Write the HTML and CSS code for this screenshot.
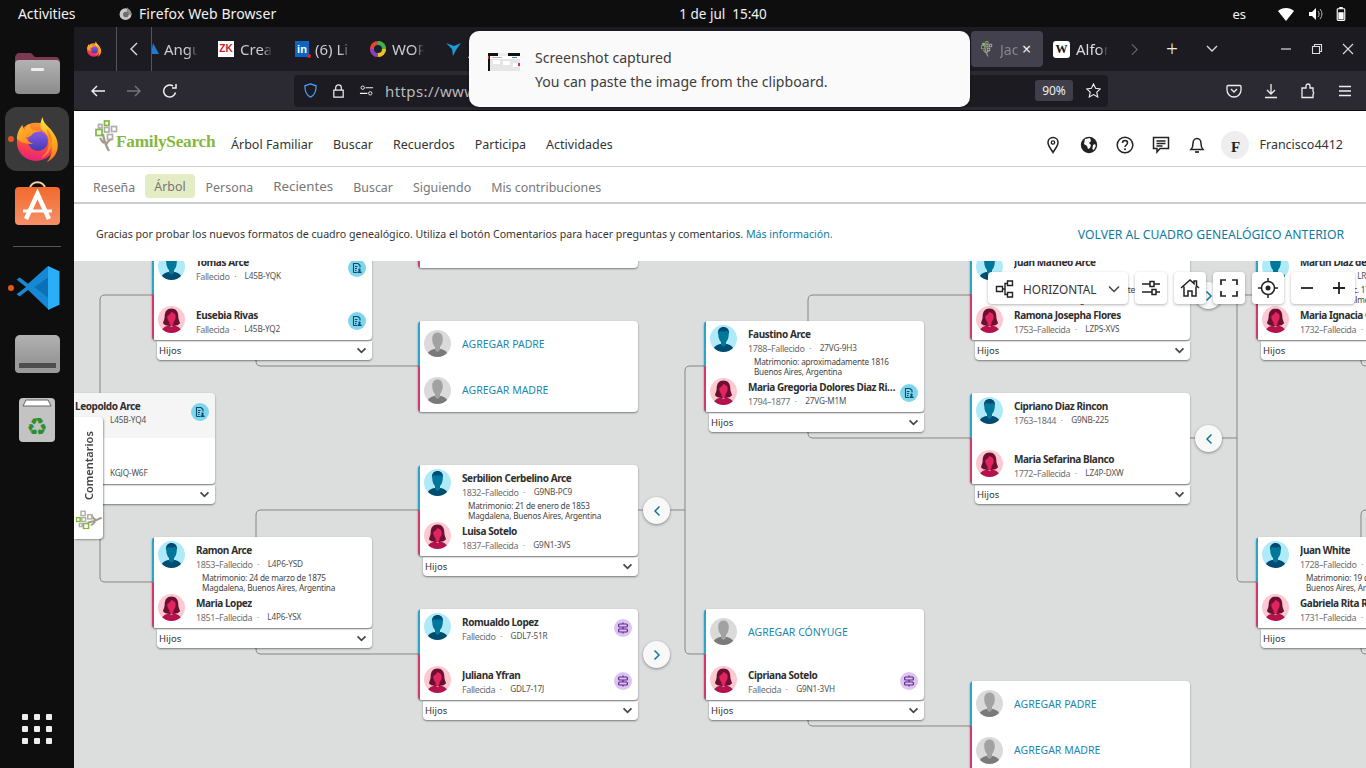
FILE: index.html
```html
<!DOCTYPE html>
<html lang="es">
<head>
<meta charset="utf-8">
<title>FamilySearch</title>
<link rel="stylesheet" href="styles.css">
</head>
<body>
<svg class="defs" aria-hidden="true">
  <defs>
    <linearGradient id="ffBody" x1="0.6" y1="0" x2="0.4" y2="1"><stop offset="0" stop-color="#ff9a2a"/><stop offset=".5" stop-color="#ff5236"/><stop offset="1" stop-color="#e8207a"/></linearGradient>
    <linearGradient id="ffFlame" x1="0.5" y1="0" x2="0.5" y2="1"><stop offset="0" stop-color="#ffe23f"/><stop offset=".6" stop-color="#ffa51e"/><stop offset="1" stop-color="#ff6a26"/></linearGradient>
    <linearGradient id="ffCore" x1="0.5" y1="0" x2="0.5" y2="1"><stop offset="0" stop-color="#8f5be8"/><stop offset="1" stop-color="#3f3bb0"/></linearGradient>
    <linearGradient id="ffFox" x1="0" y1="0" x2="1" y2="1"><stop offset="0" stop-color="#ffc02e"/><stop offset="1" stop-color="#ff7a1e"/></linearGradient>
    <linearGradient id="orangeBag" x1="0" y1="0" x2="0" y2="1"><stop offset="0" stop-color="#f26a2c"/><stop offset="1" stop-color="#f6906a"/></linearGradient>
    <linearGradient id="grayBox" x1="0" y1="0" x2="0" y2="1"><stop offset="0" stop-color="#b2b2b2"/><stop offset="1" stop-color="#8b8b8b"/></linearGradient>
    <symbol id="firefox" viewBox="0 0 48 48">
      <circle cx="23" cy="27" r="20" fill="url(#ffBody)"/>
      <path fill="url(#ffFlame)" d="M30 1c0 6 5 9 9 14 6 7 8 14 6 21-2 6-6 10-11 12 5-5 6-11 5-17-1-8-5-13-10-17-2-2-2-8 1-13z"/>
      <path fill="#ff8a1e" d="M34 13c5 5 7 12 5 19-2 6-6 10-11 12 5-4 8-9 8-15 0-6-1-11-2-16z"/>
      <circle cx="25" cy="26" r="10.500" fill="url(#ffCore)"/>
      <path fill="url(#ffFox)" d="M3 24c0-6 3-12 6-15 0 3 1 5 2 6 1-4 3-6 6-7-1 3 0 5 2 6 3 1 7 1 9 2-4 1-7 1-9 3-1 2-4 3-7 3 1 3 4 6 8 7-8 1-14-2-17-5z"/>
    </symbol>
    <symbol id="male" viewBox="0 0 27 27">
      <circle cx="13.500" cy="13.500" r="13.500" fill="#aeeaf8"/>
      <clipPath id="mClip"><circle cx="13.500" cy="13.500" r="13.500"/></clipPath>
      <g clip-path="url(#mClip)">
        <path fill="#004c70" d="M3 27c0-5 3-7 7-8h7c4 1 7 3 7 8z"/>
        <path fill="#00789c" d="M8.200 9c0-4 2-6.500 5.300-6.500S18.800 5 18.800 9c0 4.500-1.800 7-2.800 8v3l-2.500 2-2.500-2v-3c-1-1-2.800-3.500-2.800-8z"/>
        <path fill="#004c70" d="M8 9c-.5-4.500 2-7 5.500-7S19.500 4.500 19 9c-.5-1.500-1-2.500-2-3-2 .8-5 .8-7 0-1 .5-1.500 1.500-2 3z"/>
      </g>
    </symbol>
    <symbol id="female" viewBox="0 0 27 27">
      <circle cx="13.500" cy="13.500" r="13.500" fill="#fbc9cf"/>
      <clipPath id="fClip"><circle cx="13.500" cy="13.500" r="13.500"/></clipPath>
      <g clip-path="url(#fClip)">
        <path fill="#6d0f33" d="M13.500 2.500c-4.500 0-6.800 3.500-6.800 7.500 0 3.500-1.200 5-1.700 7 1 2 3 3 8.500 3s7.500-1 8.500-3c-.5-2-1.700-3.500-1.700-7 0-4-2.300-7.500-6.800-7.500z"/>
        <path fill="#e0245e" d="M13.500 6c2.500 1 4 2 4.200 4 .2 3-1.500 5.500-2.200 6.500v2l-2 2-2-2v-2c-.8-1-2.400-3.500-2.200-6.500.8-.8 3-1.500 4.200-4z"/>
        <path fill="#b3124d" d="M3 27c0-4 3-6.500 8-7.500l2.500 1.500 2.500-1.500c5 1 8 3.500 8 7.500z"/>
      </g>
    </symbol>
    <symbol id="nobody" viewBox="0 0 27 27">
      <circle cx="13.500" cy="13.500" r="13.500" fill="#dadada"/>
      <clipPath id="nClip"><circle cx="13.500" cy="13.500" r="13.500"/></clipPath>
      <g clip-path="url(#nClip)">
        <path fill="#7a7a7a" d="M3 27c0-5 3-7 7-8h7c4 1 7 3 7 8z"/>
        <path fill="#a2a2a2" d="M8.200 9c0-4 2-6.500 5.300-6.500S18.800 5 18.800 9c0 4.500-1.800 7-2.800 8v3l-2.500 2-2.500-2v-3c-1-1-2.800-3.500-2.800-8z"/>
      </g>
    </symbol>
    <symbol id="doc" viewBox="0 0 18 18">
      <circle cx="9" cy="9" r="9" fill="#7fd6ec"/>
      <path fill="none" stroke="#0a4a6a" stroke-width="1.100" d="M5.500 13.500V4.500h4.500l2 2v2M5.500 13.500H9M7 7.500h2.500M7 9.500h2M7 11.500h1.500"/>
      <circle cx="11.500" cy="10.800" r="1.200" fill="#0a4a6a"/>
      <path fill="#0a4a6a" d="M9.300 14c0-1.200 1-1.900 2.200-1.900s2.200.7 2.200 1.900z"/>
    </symbol>
    <symbol id="sign" viewBox="0 0 18 18">
      <circle cx="9" cy="9" r="9" fill="#dcc3f0"/>
      <g fill="none" stroke="#5a2a8c" stroke-width="1.200">
        <rect x="4.600" y="5" width="8.800" height="3" rx="1"/>
        <rect x="4.600" y="10" width="8.800" height="3" rx="1"/>
        <path d="M9 3.500V5M9 8v2M9 13v1.500"/>
      </g>
    </symbol>
    <symbol id="tree" viewBox="0 0 26 32">
      <path fill="none" stroke="#a09a86" stroke-width="2.200" d="M8 14c1 7 3 12 6 17M11 25c1-3 3-5 6-6M9 23c-2-1-3-3-4-5"/>
      <g fill="none" stroke-width="1.700">
        <rect x="1" y="9.500" width="6" height="6" stroke="#7fb83a"/>
        <rect x="3.500" y="4.500" width="3.500" height="3.500" stroke="#b0aea8"/>
        <rect x="9.500" y="1" width="4.500" height="4.500" stroke="#7fb83a"/>
        <rect x="9.500" y="7.500" width="4.500" height="4.500" stroke="#b0aea8"/>
        <rect x="16.500" y="6.500" width="5" height="5" stroke="#b0aea8"/>
        <rect x="12.500" y="14.500" width="5" height="5" stroke="#b0aea8"/>
      </g>
    </symbol>
    <symbol id="chev" viewBox="0 0 12 8"><path fill="none" stroke="#444" stroke-width="1.900" d="M1.500 1.500 6 6l4.500-4.500"/></symbol>
  </defs>
</svg>

<header class="topbar">
  <span class="activities">Activities</span>
  <span class="appmenu"><svg class="appicon" viewBox="0 0 48 48"><circle cx="24" cy="26" r="19" fill="#c8c8c8"/><path fill="#8d8d8d" d="M30 3c2 8 14 14 14 26L26 26z"/><circle cx="25" cy="27" r="9" fill="#6d6d6d"/></svg>Firefox Web Browser</span>
  <span class="clock">1 de jul&nbsp;&nbsp;15:40</span>
  <span class="status">
    <span class="lang">es</span>
    <svg class="st wifi" viewBox="0 0 16 14"><path fill="#fff" d="M0 4c4-4 12-4 16 0L8 14z"/></svg>
    <svg class="st vol" viewBox="0 0 16 14"><path fill="#fff" d="M2 5h3l4-4v12L5 9H2z"/><path fill="none" stroke="#bbb" d="M11 4c1.500 2 1.500 4 0 6M13 2c2.500 3 2.500 7 0 10"/></svg>
    <svg class="st batt" viewBox="0 0 10 16"><path fill="#fff" d="M3 0h4v2H3z"/><rect x=".7" y="2" width="8.600" height="13.300" rx="1" fill="none" stroke="#fff" stroke-width="1.300"/><rect x="2" y="6" width="6" height="8" fill="#fff"/></svg>
  </span>
</header>

<div class="desktop">
  <nav class="dock">
    <div class="dockitem">
      <svg class="dockicon" viewBox="0 0 45 42"><path fill="#7c3a52" d="M0 6c0-3 2-5 4-5h12l4 4h21c2 0 4 2 4 5v10H0z"/><rect y="8" width="45" height="34" rx="4" fill="url(#grayBox)"/><rect x="16" y="16" width="13" height="3" rx="1" fill="#eee"/></svg>
    </div>
    <div class="dockitem active">
      <span class="rundot"></span>
      <svg class="dockicon ff"><use href="#firefox"/></svg>
    </div>
    <div class="dockitem software">
      <svg class="dockicon" viewBox="0 0 45 44"><path fill="none" stroke="#f6d3a8" stroke-width="2" d="M15 8c0-9 15-9 15 0"/><rect y="6" width="45" height="38" rx="4" fill="url(#orangeBag)"/><path fill="none" stroke="#fff" stroke-width="4.500" d="M11 38 22.500 13 34 38"/><path fill="none" stroke="#fff" stroke-width="3" d="M8 30h29"/></svg>
    </div>
    <div class="docksep"></div>
    <div class="dockitem">
      <span class="rundot"></span>
      <svg class="dockicon" viewBox="0 0 42 42"><path fill="#1688d4" d="M31 41 12 23 4 29 1 27l9-7L1 13l3-2 8 6L31 0z"/><path fill="#2aaef5" d="M31 0l11 5v32l-11 5z"/><path fill="#0c70b5" d="M31 11 18 20l13 10z"/></svg>
    </div>
    <div class="dockitem">
      <svg class="dockicon drive" viewBox="0 0 45 38"><rect width="45" height="38" rx="5" fill="url(#grayBox)"/><rect y="24" width="45" height="14" rx="4" fill="#9a9a9a"/><rect x="4" y="28" width="37" height="5" fill="#4e4e4e"/></svg>
    </div>
    <div class="dockitem">
      <svg class="dockicon trash" viewBox="0 0 36 44"><rect width="36" height="44" rx="4" fill="#c3c3c3"/><path fill="#fff" stroke="#666" d="M4 8l3-6h22l3 6z"/><text class="recycle" x="18" y="37">♻</text></svg>
    </div>
    <div class="dockgrid">
      <i></i><i></i><i></i><i></i><i></i><i></i><i></i><i></i><i></i>
    </div>
  </nav>

  <div class="browser">
    <div class="tabbar">
      <svg class="tabff"><use href="#firefox"/></svg>
      <span class="tabscroll">
        <svg class="scrollchev" viewBox="0 0 8 14"><path fill="none" stroke="#ddd" stroke-width="1.400" d="M7 1 1 7l6 6"/></svg>
      </span>
      <div class="tabs">
        <span class="tab t1"><svg class="fav" viewBox="0 0 16 16"><path fill="#1f7ad0" d="M7 2l6 11H5z"/></svg><b class="fade">Angu</b></span>
        <span class="tab t2"><span class="zk">ZK</span><b class="fade">Crea</b></span>
        <span class="tab t3"><span class="li">in</span><b class="fade">(6) Li</b></span>
        <span class="tab t4"><svg class="fav" viewBox="0 0 16 16"><circle cx="8" cy="8" r="8" fill="#e8433a"/><path fill="#3cb44a" d="M8 8V0a8 8 0 0 1 8 8z"/><path fill="#f2c21a" d="M8 8H16a8 8 0 0 1-8 8z"/><path fill="#8a3fc7" d="M8 8v8A8 8 0 0 1 0 8z"/><circle cx="8" cy="8" r="4" fill="#123"/></svg><b class="fade">WOR</b></span>
        <span class="tab t5"><svg class="fav" viewBox="0 0 16 16"><path fill="#1b9bd8" d="M0 2l8 3 7-3-5 7-3 6-1-7z"/></svg><b class="fade">J</b></span>
      </div>
      <span class="tab activetab"><svg class="fav"><use href="#tree"/></svg><b class="fade">Jac</b><span class="tabx">×</span></span>
      <span class="tab t7"><span class="wiki">W</span><b class="fade">Alfor</b></span>
      <svg class="tabnext" viewBox="0 0 8 14"><path fill="none" stroke="#777" stroke-width="1.200" d="M1 1l6 6-6 6"/></svg>
      <span class="tabplus">+</span>
      <svg class="tabdown" viewBox="0 0 12 8"><path fill="none" stroke="#ddd" stroke-width="1.300" d="M1 1l5 5 5-5"/></svg>
      <span class="winctl">
        <svg viewBox="0 0 12 12"><path stroke="#ddd" stroke-width="1.200" d="M1 6h10"/></svg>
        <svg viewBox="0 0 12 12"><path fill="none" stroke="#ddd" stroke-width="1.100" d="M1.500 3.500h7v7h-7zM3.500 3.500v-2h7v7h-2"/></svg>
        <svg viewBox="0 0 12 12"><path stroke="#ddd" stroke-width="1.100" d="M1 1l10 10M11 1 1 11"/></svg>
      </span>
    </div>

    <div class="navbar">
      <svg class="nb" viewBox="0 0 16 16"><path fill="none" stroke="#f2f2f2" stroke-width="1.400" d="M15 8H2M7 3 2 8l5 5"/></svg>
      <svg class="nb" viewBox="0 0 16 16"><path fill="none" stroke="#77767f" stroke-width="1.400" d="M1 8h13M9 3l5 5-5 5"/></svg>
      <svg class="nb" viewBox="0 0 16 16"><path fill="none" stroke="#f2f2f2" stroke-width="1.500" d="M13.500 9.500A6 6 0 1 1 11 3M14 1v4h-4"/></svg>
      <div class="urlbar">
        <svg class="ub shield" viewBox="0 0 16 16"><path fill="none" stroke="#45a1ff" stroke-width="1.300" d="M8 1l6 2c0 6-1 10-6 12C3 13 2 9 2 3z"/></svg>
        <svg class="ub" viewBox="0 0 16 16"><path fill="none" stroke="#eee" stroke-width="1.300" d="M3 7.500h10V15H3zM5 7.500V5a3 3 0 0 1 6 0v2.500"/></svg>
        <svg class="ub" viewBox="0 0 16 16"><path fill="none" stroke="#eee" stroke-width="1.200" d="M7 5h8M1 11h8"/><circle cx="4" cy="5" r="1.800" fill="none" stroke="#eee"/><circle cx="12" cy="11" r="1.800" fill="none" stroke="#eee"/></svg>
        <span class="url">https://www.familysearch.org</span>
        <span class="zoompill">90%</span>
        <svg class="ub star" viewBox="0 0 16 16"><path fill="none" stroke="#eee" stroke-width="1.200" d="M8 1l2.200 4.700 5 .6-3.700 3.500 1 5L8 12.300 3.500 14.800l1-5L.8 6.300l5-.6z"/></svg>
      </div>
      <div class="navright">
        <svg class="nb" viewBox="0 0 16 16"><path fill="none" stroke="#eee" stroke-width="1.300" d="M2 2.500h12c.5 0 1 .5 1 1V7a7 7 0 0 1-14 0V3.500c0-.5.500-1 1-1zM5 6l3 3 3-3"/></svg>
        <svg class="nb" viewBox="0 0 16 16"><path fill="none" stroke="#eee" stroke-width="1.300" d="M8 1v9M4 7l4 4 4-4M2 14.500h12"/></svg>
        <svg class="nb" viewBox="0 0 16 16"><path fill="none" stroke="#eee" stroke-width="1.300" d="M2 14.500V5h4V3a2 2 0 0 1 4 0v2h3v3.500a2 2 0 0 1 0 3v3z"/></svg>
        <svg class="nb" viewBox="0 0 16 16"><path stroke="#eee" stroke-width="1.400" d="M2 3.500h12M2 8h12M2 12.500h12"/></svg>
      </div>
    </div>

    <main class="page">
      <div class="fsheader">
        <div class="logo"><svg class="logotree"><use href="#tree"/></svg><span class="logotext">FamilySearch</span></div>
        <nav class="mainnav"><a>Árbol Familiar</a><a>Buscar</a><a>Recuerdos</a><a>Participa</a><a>Actividades</a></nav>
        <div class="hdright">
          <svg class="hi" viewBox="0 0 18 18"><path fill="none" stroke="#222" stroke-width="1.500" d="M9 1.500c-3 0-5 2.200-5 5 0 3.500 3.500 7 5 10 1.500-3 5-6.500 5-10 0-2.800-2-5-5-5z"/><circle cx="9" cy="6.500" r="1.700" fill="none" stroke="#222" stroke-width="1.300"/></svg>
          <svg class="hi" viewBox="0 0 18 18"><circle cx="9" cy="9" r="8.200" fill="#222"/><path fill="#fff" d="M5 3l5-1 1 3-2 2 2 2-1 3-2 1-1-3-3-2zM13 9l2-1 .8 2-2 4-1.500-1z"/></svg>
          <svg class="hi" viewBox="0 0 18 18"><circle cx="9" cy="9" r="7.800" fill="none" stroke="#222" stroke-width="1.500"/><path fill="none" stroke="#222" stroke-width="1.500" d="M6.500 7c0-3.200 5-3.200 5 0 0 2-2.500 2-2.500 4"/><circle cx="9" cy="13.300" r="1" fill="#222"/></svg>
          <svg class="hi" viewBox="0 0 18 18"><path fill="none" stroke="#222" stroke-width="1.500" d="M1.500 1.500h15v11H8l-3 3.500v-3.500H1.500z"/><path stroke="#222" stroke-width="1.300" d="M4.500 5h9M4.500 7.500h9M4.500 10h6"/></svg>
          <svg class="hi" viewBox="0 0 18 18"><path fill="none" stroke="#222" stroke-width="1.500" d="M3 13.500h12c-1.500-1.500-2-3-2-6 0-2.500-1.500-5-4-5S5 5 5 7.500c0 3-.5 4.500-2 6z"/><path stroke="#222" stroke-width="1.700" d="M7 16h4"/></svg>
          <span class="avatarF">F</span>
          <span class="username">Francisco4412</span>
        </div>
      </div>
      <div class="subnav">
        <a>Reseña</a><a class="on">Árbol</a><a>Persona</a><a class="rec">Recientes</a><a>Buscar</a><a>Siguiendo</a><a>Mis contribuciones</a>
      </div>
      <div class="banner">
        <p>Gracias por probar los nuevos formatos de cuadro genealógico. Utiliza el botón Comentarios para hacer preguntas y comentarios. <a>Más información.</a></p>
        <a class="oldchart">VOLVER AL CUADRO GENEALÓGICO ANTERIOR</a>
      </div>

      <section class="canvas">
        <svg class="links" viewBox="0 0 1292 507">
          <path d="M78 34H31q-5 0-5 5V316q0 5 5 5H78M182 99v1q0 5 5 5H344M182 276V254q0-5 5-5H344M182 387v1q0 5 5 5H344M564 249H611M630 105H616q-5 0-5 5V388q0 5 5 5H630M734 60V39q0-5 5-5H896M734 171v1q0 5 5 5H896M734 459v1q0 5 5 5H896M1116 177H1163M1182 34H1168q-5 0-5 5V316q0 5 5 5H1182M1287 276V254q0-5 5-5M1287 387v1q0 5 5 5M1287 99v1q0 5 5 5"/>
        </svg>

        <article class="card c-a"><div class="main">
          <div class="person"><svg class="av"><use href="#male"/></svg><div class="info"><h3>Tomas Arce</h3><p class="sub"><span>Fallecido</span><i>•</i><span class="id">L45B-YQK</span></p></div><svg class="badge"><use href="#doc"/></svg></div>
          <div class="person"><svg class="av"><use href="#female"/></svg><div class="info"><h3>Eusebia Rivas</h3><p class="sub"><span>Fallecida</span><i>•</i><span class="id">L45B-YQ2</span></p></div><svg class="badge"><use href="#doc"/></svg></div>
        </div><div class="kids">Hijos<svg class="chev"><use href="#chev"/></svg></div></article>

        <article class="card c-b"><div class="main"></div></article>

        <article class="card c-c"><div class="main">
          <div class="person add"><svg class="av"><use href="#nobody"/></svg><a>AGREGAR PADRE</a></div>
          <div class="person add"><svg class="av"><use href="#nobody"/></svg><a>AGREGAR MADRE</a></div>
        </div></article>

        <article class="card c-d"><div class="main plain">
          <div class="person"><svg class="av"><use href="#male"/></svg><div class="info"><h3>Leopoldo Arce</h3><p class="sub"><span class="shortlife">Vivo</span><span class="id">L45B-YQ4</span></p></div><svg class="badge"><use href="#doc"/></svg></div>
          <div class="person"><svg class="av"><use href="#female"/></svg><div class="info"><h3>&nbsp;</h3><p class="sub"><span class="shortlife">Viva</span><span class="id">KGJQ-W6F</span></p></div></div>
        </div><div class="kids">Hijos<svg class="chev"><use href="#chev"/></svg></div></article>

        <article class="card c-e"><div class="main">
          <div class="person"><svg class="av"><use href="#male"/></svg><div class="info"><h3>Serbilion Cerbelino Arce</h3><p class="sub"><span>1832–Fallecido</span><i>•</i><span class="id">G9NB-PC9</span></p></div></div>
          <p class="marriage">Matrimonio: 21 de enero de 1853<br>Magdalena, Buenos Aires, Argentina</p>
          <div class="person"><svg class="av"><use href="#female"/></svg><div class="info"><h3>Luisa Sotelo</h3><p class="sub"><span>1837–Fallecida</span><i>•</i><span class="id">G9N1-3VS</span></p></div></div>
        </div><div class="kids">Hijos<svg class="chev"><use href="#chev"/></svg></div></article>

        <article class="card c-f"><div class="main">
          <div class="person"><svg class="av"><use href="#male"/></svg><div class="info"><h3>Ramon Arce</h3><p class="sub"><span>1853–Fallecido</span><i>•</i><span class="id">L4P6-YSD</span></p></div></div>
          <p class="marriage">Matrimonio: 24 de marzo de 1875<br>Magdalena, Buenos Aires, Argentina</p>
          <div class="person"><svg class="av"><use href="#female"/></svg><div class="info"><h3>Maria Lopez</h3><p class="sub"><span>1851–Fallecida</span><i>•</i><span class="id">L4P6-YSX</span></p></div></div>
        </div><div class="kids">Hijos<svg class="chev"><use href="#chev"/></svg></div></article>

        <article class="card c-g"><div class="main">
          <div class="person"><svg class="av"><use href="#male"/></svg><div class="info"><h3>Romualdo Lopez</h3><p class="sub"><span>Fallecido</span><i>•</i><span class="id">GDL7-51R</span></p></div><svg class="badge"><use href="#sign"/></svg></div>
          <div class="person"><svg class="av"><use href="#female"/></svg><div class="info"><h3>Juliana Yfran</h3><p class="sub"><span>Fallecida</span><i>•</i><span class="id">GDL7-17J</span></p></div><svg class="badge"><use href="#sign"/></svg></div>
        </div><div class="kids">Hijos<svg class="chev"><use href="#chev"/></svg></div></article>

        <article class="card c-h"><div class="main">
          <div class="person"><svg class="av"><use href="#male"/></svg><div class="info"><h3>Faustino Arce</h3><p class="sub"><span>1788–Fallecido</span><i>•</i><span class="id">27VG-9H3</span></p></div></div>
          <p class="marriage">Matrimonio: aproximadamente 1816<br>Buenos Aires, Argentina</p>
          <div class="person"><svg class="av"><use href="#female"/></svg><div class="info"><h3>Maria Gregoria Dolores Diaz Rincon</h3><p class="sub"><span>1794–1877</span><i>•</i><span class="id">27VG-M1M</span></p></div><svg class="badge"><use href="#doc"/></svg></div>
        </div><div class="kids">Hijos<svg class="chev"><use href="#chev"/></svg></div></article>

        <article class="card c-i"><div class="main">
          <div class="person add"><svg class="av"><use href="#nobody"/></svg><a>AGREGAR CÓNYUGE</a></div>
          <div class="person"><svg class="av"><use href="#female"/></svg><div class="info"><h3>Cipriana Sotelo</h3><p class="sub"><span>Fallecida</span><i>•</i><span class="id">G9N1-3VH</span></p></div><svg class="badge"><use href="#sign"/></svg></div>
        </div><div class="kids">Hijos<svg class="chev"><use href="#chev"/></svg></div></article>

        <article class="card c-j"><div class="main">
          <div class="person"><svg class="av"><use href="#male"/></svg><div class="info"><h3>Juan Matheo Arce</h3><p class="sub"><span>1750–Fallecido</span><i>•</i><span class="id">LZPS-XV1</span></p></div></div>
          <p class="marriage">Matrimonio: aproximadamente<br>Buenos Aires, Argentina</p>
          <div class="person"><svg class="av"><use href="#female"/></svg><div class="info"><h3>Ramona Josepha Flores</h3><p class="sub"><span>1753–Fallecida</span><i>•</i><span class="id">LZPS-XVS</span></p></div></div>
        </div><div class="kids">Hijos<svg class="chev"><use href="#chev"/></svg></div></article>

        <article class="card c-k"><div class="main">
          <div class="person"><svg class="av"><use href="#male"/></svg><div class="info"><h3>Cipriano Diaz Rincon</h3><p class="sub"><span>1763–1844</span><i>•</i><span class="id">G9NB-225</span></p></div></div>
          <div class="person"><svg class="av"><use href="#female"/></svg><div class="info"><h3>Maria Sefarina Blanco</h3><p class="sub"><span>1772–Fallecida</span><i>•</i><span class="id">LZ4P-DXW</span></p></div></div>
        </div><div class="kids">Hijos<svg class="chev"><use href="#chev"/></svg></div></article>

        <article class="card c-l"><div class="main">
          <div class="person add"><svg class="av"><use href="#nobody"/></svg><a>AGREGAR PADRE</a></div>
          <div class="person add"><svg class="av"><use href="#nobody"/></svg><a>AGREGAR MADRE</a></div>
        </div></article>

        <article class="card c-m"><div class="main">
          <div class="person"><svg class="av"><use href="#male"/></svg><div class="info"><h3>Martin Diaz de Rincon</h3><p class="sub"><span>1736–1789</span><i>•</i><span class="id">LRIM-XYZ</span></p></div></div>
          <p class="marriage">Matrimonio: c. 1755<br>San Isidro, Palmeras</p>
          <div class="person"><svg class="av"><use href="#female"/></svg><div class="info"><h3>Maria Ignacia Cruz</h3><p class="sub"><span>1732–Fallecida</span><i>•</i><span class="id">LRIM-XYQ</span></p></div></div>
        </div><div class="kids">Hijos<svg class="chev"><use href="#chev"/></svg></div></article>

        <article class="card c-n"><div class="main">
          <div class="person"><svg class="av"><use href="#male"/></svg><div class="info"><h3>Juan White</h3><p class="sub"><span>1728–Fallecido</span><i>•</i><span class="id">GHJK-LM2</span></p></div></div>
          <p class="marriage">Matrimonio: 19 de mayo de 1750<br>Buenos Aires, Argentina</p>
          <div class="person"><svg class="av"><use href="#female"/></svg><div class="info"><h3>Gabriela Rita Rodriguez</h3><p class="sub"><span>1731–Fallecida</span><i>•</i><span class="id">GHJK-LM3</span></p></div></div>
        </div><div class="kids">Hijos<svg class="chev"><use href="#chev"/></svg></div></article>

        <button class="round b1"><svg viewBox="0 0 8 12"><path d="M6.500 1.500 2 6l4.500 4.500"/></svg></button>
        <button class="round b2"><svg viewBox="0 0 8 12"><path d="M1.500 1.500 6 6l-4.500 4.500"/></svg></button>
        <button class="round b3"><svg viewBox="0 0 8 12"><path d="M6.500 1.500 2 6l4.500 4.500"/></svg></button>
        <button class="round b4"><svg viewBox="0 0 8 12"><path d="M1.500 1.500 6 6l-4.500 4.500"/></svg></button>

        <aside class="comments">
          <span class="commentlabel">Comentarios</span>
          <svg class="commentlogo"><use href="#tree"/></svg>
        </aside>

        <div class="tools">
          <div class="tool layout">
            <svg class="ti" viewBox="0 0 20 20"><path fill="none" stroke="#222" stroke-width="1.400" d="M1.500 7.500h6v5h-6zM12.500 2h5v4.500h-5zM12.500 13.500h5V18h-5zM7.500 10H10M12.500 4.500H10v11h2.500"/></svg>
            <span>HORIZONTAL</span>
            <svg class="tchev" viewBox="0 0 12 8"><path fill="none" stroke="#444" stroke-width="1.500" d="M1 1.500 6 6.500l5-5"/></svg>
          </div>
          <div class="tool sq"><svg class="ti" viewBox="0 0 20 20"><path fill="none" stroke="#222" stroke-width="1.500" d="M1 6h8M13 6h6M9 3.500h4v5H9zM1 14h10M15 14h4M11 11.500h4v5h-4z"/></svg></div>
          <div class="tool sq"><svg class="ti" viewBox="0 0 20 20"><path fill="none" stroke="#222" stroke-width="1.500" d="M1 10 10 2l4 3.500V3h2.500v4.700L19 10M4 8.500V18h4v-5h4v5h4V8.500"/></svg></div>
          <div class="tool sq"><svg class="ti" viewBox="0 0 20 20"><path fill="none" stroke="#222" stroke-width="1.700" d="M2 7V2h5M13 2h5v5M18 13v5h-5M7 18H2v-5"/></svg></div>
          <div class="tool sq"><svg class="ti" viewBox="0 0 20 20"><circle cx="10" cy="10" r="6.500" fill="none" stroke="#222" stroke-width="1.500"/><circle cx="10" cy="10" r="2.500" fill="#222"/><path stroke="#222" stroke-width="1.500" d="M10 0v3.500M10 16.500V20M0 10h3.500M16.500 10H20"/></svg></div>
          <div class="tool zoomer"><svg class="ti" viewBox="0 0 20 20"><path stroke="#222" stroke-width="1.800" d="M4 10h12"/></svg><svg class="ti" viewBox="0 0 20 20"><path stroke="#222" stroke-width="1.800" d="M4 10h12M10 4v12"/></svg></div>
        </div>
      </section>

      <div class="toast">
        <svg class="thumb" viewBox="0 0 32 18"><rect width="32" height="18" fill="#e6e6e6"/><rect width="32" height="3" fill="#111"/><rect x="10" y="0" width="10" height="3" fill="#eee"/><rect y="0" width="2" height="18" fill="#111"/><rect x="2" y="3" width="30" height="3" fill="#fff"/><rect x="4" y="4" width="10" height="1" fill="#d8b08a"/><rect x="24" y="4" width="5" height="1" fill="#48b"/><rect y="3" width="1" height="3" fill="#c33"/><rect x="5" y="7" width="7" height="4" fill="#fff"/><rect x="15" y="8" width="7" height="4" fill="#fff"/><rect x="25" y="10" width="5" height="4" fill="#fff"/><rect x="30" y="10" width="2" height="3" fill="#c35"/></svg>
        <div class="toasttext"><p>Screenshot captured</p><p>You can paste the image from the clipboard.</p></div>
      </div>
    </main>
  </div>
</div>
</body>
</html>
```

FILE: styles.css
```css
* { box-sizing: border-box; }
html, body { margin: 0; height: 100%; }
body { width: 1366px; height: 768px; overflow: hidden; background: #0e0e0e; font-family: "Noto Sans", sans-serif; display: flex; flex-direction: column; }
p, h3 { margin: 0; }
.defs { position: absolute; width: 0; height: 0; }

/* GNOME top bar */
.topbar { height: 27px; flex: none; display: flex; align-items: center; position: relative; color: #f2f2f2; font: 14px "Noto Sans", sans-serif; background: #0e0e0e; padding-left: 18px; }
.activities { width: 100px; letter-spacing: -.1px; }
.appmenu { display: flex; align-items: center; gap: 6px; letter-spacing: .1px; }
.appicon { width: 15px; height: 15px; margin-left: 0; }
.clock { position: absolute; left: 678px; width: 90px; text-align: center; font-size: 13.500px; white-space: nowrap; }
.status { margin-left: auto; display: flex; align-items: center; height: 100%; padding-right: 20px; }
.lang { margin-right: 32px; font-size: 13px; }
.st { height: 14px; }
.wifi { width: 16px; margin-right: 13px; }
.vol { width: 16px; margin-right: 13px; }
.batt { width: 10px; }

.desktop { flex: 1; display: flex; min-height: 0; }

/* Dock */
.dock { width: 74px; flex: none; display: flex; flex-direction: column; align-items: center; padding: 14px 0 7px; gap: 2px; background: #0e0e0e; }
.dockitem { width: 64px; height: 64px; flex: none; display: flex; align-items: center; justify-content: center; border-radius: 12px; position: relative; }
.dockitem.active { background: #3a3a3a; }
.software { padding-bottom: 4px; }
.rundot { position: absolute; left: 3px; top: 29px; width: 6px; height: 6px; border-radius: 50%; background: #e95420; }
.dockicon { width: 45px; height: 44px; }
.ff { width: 46px; height: 46px; }
.drive { height: 38px; }
.trash { width: 36px; }
.recycle { font: 24px "DejaVu Sans", sans-serif; fill: #2f8f2a; text-anchor: middle; }
.docksep { width: 48px; height: 1px; background: #555; margin: 7px 0; }
.dockgrid { margin-top: auto; width: 64px; height: 64px; display: grid; grid-template-columns: repeat(3, 6px); grid-auto-rows: 6px; gap: 6px; justify-content: center; align-content: center; }
.dockgrid i { background: #eee; border-radius: 1px; }

/* Firefox chrome */
.browser { flex: 1; min-width: 0; display: flex; flex-direction: column; }
.tabbar { height: 44px; flex: none; display: flex; align-items: center; background: #1c1b22; color: #ccc; font-size: 15px; position: relative; }
.tabff { width: 16px; height: 16px; margin-left: 12px; flex: none; }
.tabscroll { margin-left: 14px; width: 36px; height: 44px; flex: none; border-left: 1px solid #55545c; border-right: 1px solid #55545c; display: flex; align-items: center; justify-content: center; }
.scrollchev { width: 8px; height: 14px; }
.tabs { display: flex; width: 819px; flex: none; overflow: hidden; }
.tab { display: flex; align-items: center; gap: 6px; flex: none; }
.tab b { font-weight: 400; }
.fade { overflow: hidden; white-space: nowrap; -webkit-mask-image: linear-gradient(90deg, #000 70%, transparent); mask-image: linear-gradient(90deg, #000 70%, transparent); }
.t1 { width: 72px; margin-left: -6px; gap: 2px; }
.t1 .fade { width: 34px; }
.t2 { width: 77px; }
.t2 .fade { width: 32px; }
.t3 { width: 75px; }
.t3 .fade { width: 36px; }
.t4 { width: 76px; }
.t4 .fade { width: 32px; }
.t5 { width: 40px; }
.fav { width: 16px; height: 16px; flex: none; }
.zk { width: 16px; height: 16px; background: #fff; color: #c8232c; font: 700 10px/16px "Liberation Sans", sans-serif; text-align: center; }
.li { position: relative; width: 14px; height: 16px; background: #0a66c2; color: #fff; font: 700 11px/16px "Liberation Sans", sans-serif; text-align: center; }
.li::after { content: ""; position: absolute; right: -2px; bottom: -1px; width: 4px; height: 4px; border-radius: 50%; background: #e0202a; }
.activetab { width: 72px; height: 36px; border-radius: 4px; background: #42414d; padding-left: 10px; color: #888; position: relative; }
.activetab .fav { width: 13px; }
.activetab .fade { width: 22px; font-size: 14px; }
.tabx { color: #eee; position: absolute; left: 51px; font-size: 16px; }
.t7 { width: 85px; padding-left: 10px; }
.t7 .fade { width: 32px; color: #ddd; }
.wiki { width: 17px; height: 17px; flex: none; background: #fff; border-radius: 3px; color: #111; font: 700 12px/17px "Liberation Serif", serif; text-align: center; }
.tabnext { width: 7px; height: 13px; flex: none; margin-left: 3px; }
.tabplus { font-size: 21px; color: #eee; margin-left: 28px; flex: none; font-weight: 300; }
.tabdown { width: 12px; height: 8px; margin-left: 28px; flex: none; }
.winctl { margin-left: auto; display: flex; gap: 19px; padding-right: 12px; }
.winctl svg { width: 12px; height: 12px; }
.navbar { height: 40px; flex: none; display: flex; align-items: center; background: #2b2a33; border-bottom: 1px solid #0c0c0f; }
.nb { width: 16px; height: 16px; flex: none; margin-left: 16px; }
.navbar > .nb { margin-right: 4px; }
.urlbar { margin-left: 112px; width: 814px; height: 32px; flex: none; background: #1c1b22; border-radius: 4px; display: flex; align-items: center; padding-left: 9px; color: #b8b8bc; font-size: 15px; }
.ub { width: 15px; height: 15px; margin-right: 13px; flex: none; }
.url { margin-left: -2px; letter-spacing: .4px; white-space: nowrap; width: 650px; overflow: hidden; }
.zoompill { width: 38px; height: 21px; background: #3f3e49; border-radius: 3px; color: #eee; font-size: 12px; line-height: 21px; text-align: center; flex: none; }
.star { margin: 0 0 0 13px; }
.navright { display: flex; margin-left: 118px; }
.navright .nb { margin: 0 21px 0 0; }

/* FamilySearch page */
.page { flex: 1; min-height: 0; background: #fff; display: flex; flex-direction: column; position: relative; }
.fsheader { height: 56px; flex: none; display: flex; align-items: center; border-bottom: 1px solid #ccc; padding: 12px 23px 0 21px; }
.logo { width: 136px; flex: none; position: relative; height: 32px; margin-top: -17px; }
.logotree { position: absolute; left: 0; top: 0; width: 26px; height: 32px; }
.logotext { position: absolute; left: 21px; top: 11px; color: #85b73c; font: 700 17.300px/22px "Liberation Serif", serif; letter-spacing: -.25px; white-space: nowrap; }
.mainnav { display: flex; gap: 20px; color: #333; font-size: 12.500px; white-space: nowrap; }
.hdright { margin-left: auto; display: flex; align-items: center; }
.hi { width: 18px; height: 18px; margin-right: 18px; flex: none; }
.avatarF { width: 28px; height: 28px; border-radius: 50%; background: #eee; margin-left: -3px; font: 700 15px/32px "Liberation Serif", serif; text-align: center; color: #222; flex: none; }
.username { margin-left: 10px; font-size: 12.500px; color: #333; }
.subnav { height: 37px; flex: none; display: flex; align-items: center; border-bottom: 2px solid #ccc; padding: 5px 0 0 19px; color: #777; font-size: 12.400px; white-space: nowrap; }
.subnav a { margin-right: 20px; }
.subnav .on { background: #e3ecc5; border-radius: 4px; padding: 0 9px; height: 24px; line-height: 26px; margin: -2px 11px 0 -10px; }
.subnav .rec { font-size: 13.300px; position: relative; bottom: 1px; }
.banner { height: 57px; flex: none; display: flex; align-items: center; justify-content: space-between; padding: 3px 22px 0 22px; font-size: 10.620px; color: #333; }
.banner a { color: #0f7a9f; }
.oldchart { font-size: 12.200px; }

/* Chart canvas */
.canvas { flex: 1; min-height: 0; position: relative; overflow: hidden; background: #dcdddd; }
.links { position: absolute; left: 0; top: 0; width: 1292px; height: 507px; }
.links path { fill: none; stroke: #858585; stroke-width: 1; }
.card { position: absolute; width: 220px; color: #333; font-size: 9px; }
.main { height: 91px; padding: 4px 0 7px 6px; display: flex; flex-direction: column; justify-content: space-between; border-radius: 4px; background: linear-gradient(#2ba6c8 50%, #d23a68 50%) left top / 2px 100% no-repeat, #fff; box-shadow: 0 1px 2px rgba(0,0,0,.45); position: relative; }
.plain { background: linear-gradient(#f5f5f5 45px, #fff 45px); }
.person { height: 27px; flex: none; display: flex; align-items: flex-start; position: relative; }
.av { width: 27px; height: 27px; flex: none; }
.info { margin-left: 11px; min-width: 0; }
.info h3 { font-size: 10px; letter-spacing: -.42px; line-height: 14px; margin-top: 2px; font-weight: 700; white-space: nowrap; max-width: 148px; overflow: hidden; text-overflow: ellipsis; color: #2e2e2e; }
.sub { display: flex; align-items: center; margin-top: 2px; font-size: 9px; letter-spacing: -.4px; line-height: 12px; color: #707070; white-space: nowrap; }
.sub i { font-style: normal; font-size: 4px; margin: 0 9px 0 5px; }
.id { font-size: 8.200px; letter-spacing: -.15px; color: #505050; position: relative; bottom: 1px; }
.shortlife { width: 35px; }
.badge { width: 18px; height: 18px; flex: none; position: absolute; right: 6px; top: 6px; }
.marriage { margin-left: 44px; font-size: 8.200px; letter-spacing: -.2px; line-height: 10px; color: #444; white-space: nowrap; position: relative; top: 2px; }
.add { align-items: center; }
.add:first-child { margin-top: 5px; }
.add:last-child { margin-bottom: 1.500px; }
.add a { margin-left: 11px; color: #1d87ad; font-size: 10.500px; }
.kids { margin: 1px 0 0 5px; height: 19px; background: #fff; padding: 0 5px 0 2px; font-size: 9.500px; line-height: 19px; color: #333; display: flex; justify-content: space-between; align-items: center; border-radius: 0 0 4px 4px; box-shadow: 0 1px 2px rgba(0,0,0,.45); }
.chev { width: 11px; height: 7px; }

.c-a { left: 78px; top: -12px; }
.c-b { left: 344px; top: -84px; }
.c-c { left: 344px; top: 60px; }
.c-d { left: -43px; top: 132px; width: 184px; }
.c-e { left: 344px; top: 204px; }
.c-f { left: 78px; top: 276px; }
.c-g { left: 344px; top: 348px; }
.c-h { left: 630px; top: 60px; }
.c-i { left: 630px; top: 348px; }
.c-j { left: 896px; top: -12px; }
.c-k { left: 896px; top: 132px; }
.c-l { left: 896px; top: 420px; }
.c-m { left: 1182px; top: -12px; }
.c-n { left: 1182px; top: 276px; }

.round { position: absolute; width: 27px; height: 27px; border-radius: 50%; border: 0; padding: 0; background: #f8f8f8; box-shadow: 0 1px 3px rgba(0,0,0,.4); display: flex; align-items: center; justify-content: center; }
.round svg { width: 8px; height: 12px; }
.round path { fill: none; stroke: #0f7a9f; stroke-width: 1.500; }
.b1 { left: 569px; top: 236px; }
.b2 { left: 569px; top: 380px; }
.b3 { left: 1121px; top: 164px; }
.b4 { left: 1121px; top: 21px; }

.comments { position: absolute; left: 0; top: 156px; width: 29px; height: 122px; background: #fff; border-radius: 0 4px 4px 0; box-shadow: 1px 1px 2px rgba(0,0,0,.35); display: flex; flex-direction: column; align-items: center; }
.commentlabel { writing-mode: vertical-rl; transform: rotate(180deg); margin-top: 15px; font-size: 11px; font-weight: 600; color: #444; line-height: 29px; height: 68px; white-space: nowrap; }
.commentlogo { width: 22px; height: 27px; margin-top: 5px; transform: rotate(-90deg); flex: none; }

.tools { position: absolute; top: 11px; right: 11px; display: flex; gap: 7px; }
.tool { height: 32px; background: #fff; border-radius: 4px; box-shadow: 0 1px 3px rgba(0,0,0,.3); display: flex; align-items: center; justify-content: center; }
.ti { width: 20px; height: 20px; flex: none; }
.layout { width: 140px; padding: 1px 0 0 7px; justify-content: flex-start; font-size: 11.800px; color: #333; gap: 8px; }
.tchev { width: 12px; height: 8px; margin-left: 3px; }
.sq { width: 32px; }
.zoomer { width: 64px; justify-content: space-between; padding: 0 6px; }

.toast { position: absolute; left: 395px; top: -80px; width: 501px; height: 76px; background: #fafafa; border-radius: 10px; box-shadow: 0 1px 3px rgba(0,0,0,.5); display: flex; align-items: center; padding: 2px 0 0 19px; color: #3d3d3d; font-size: 14.100px; }
.thumb { width: 32px; height: 18px; flex: none; margin-top: -16px; }
.toasttext { margin-left: 15px; line-height: 24px; }
```
